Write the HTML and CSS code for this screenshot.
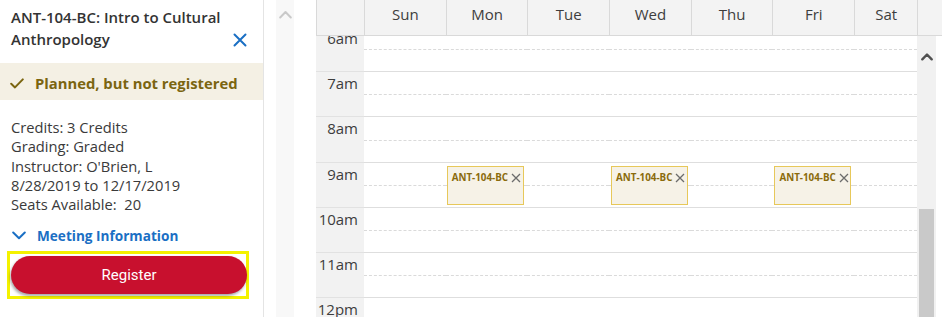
FILE: index.html
```html
<!DOCTYPE html>
<html lang="en">
<head>
<meta charset="utf-8">
<title>Course Schedule</title>
<link rel="stylesheet" href="styles.css">
</head>
<body>
<aside class="sidebar">
  <div class="course-head">
    <h1 class="course-title">ANT-104-BC: Intro to Cultural Anthropology</h1>
    <button class="close-btn" aria-label="Close">
      <svg width="14" height="14" viewBox="0 0 14 14"><path d="M1.5 1.5 L12.5 12.5 M12.5 1.5 L1.5 12.5" stroke="#1a6fc4" stroke-width="2" fill="none" stroke-linecap="round"/></svg>
    </button>
  </div>
  <div class="status">
    <svg width="14" height="11" viewBox="0 0 14 11"><polyline points="1.2,5.8 5,9.4 12.8,1.4" stroke="#7b6510" stroke-width="2" fill="none" stroke-linecap="round" stroke-linejoin="round"/></svg>
    <span>Planned, but not registered</span>
  </div>
  <div class="details">
    <div>Credits: 3 Credits</div>
    <div>Grading: Graded</div>
    <div>Instructor: O'Brien, L</div>
    <div>8/28/2019 to 12/17/2019</div>
    <div>Seats Available:&nbsp; 20</div>
  </div>
  <div class="meeting">
    <svg width="14" height="9" viewBox="0 0 14 9"><polyline points="1.2,1.5 7,7.2 12.8,1.5" stroke="#1a6fc4" stroke-width="2" fill="none" stroke-linecap="round" stroke-linejoin="round"/></svg>
    <span>Meeting Information</span>
  </div>
  <div class="highlight">
    <button class="register-btn">Register</button>
  </div>
</aside>

<div class="gutter">
  <div class="gutter-strip">
    <svg width="13" height="9" viewBox="0 0 13 9"><polyline points="1.2,7.5 6.5,2 11.8,7.5" stroke="#c9c9c9" stroke-width="2" fill="none" stroke-linecap="round" stroke-linejoin="round"/></svg>
  </div>
</div>

<main class="calendar">
  <div class="cal-header">
    <div class="hcell"></div>
    <div class="hcell">Sun</div>
    <div class="hcell">Mon</div>
    <div class="hcell">Tue</div>
    <div class="hcell">Wed</div>
    <div class="hcell">Thu</div>
    <div class="hcell">Fri</div>
    <div class="hcell">Sat</div>
    <div class="hcell hcell-end"></div>
  </div>
  <div class="cal-body">
    <div class="timeline">
      <div class="timeline-inner">
        <div class="time-col">
          <div class="tslot">6am</div>
          <div class="tslot">7am</div>
          <div class="tslot">8am</div>
          <div class="tslot">9am</div>
          <div class="tslot">10am</div>
          <div class="tslot">11am</div>
          <div class="tslot">12pm</div>
        </div>
        <div class="day-col">
          <div class="slot"></div><div class="slot"></div><div class="slot"></div><div class="slot"></div><div class="slot"></div><div class="slot"></div><div class="slot"></div>
        </div>
        <div class="day-col">
          <div class="slot"></div><div class="slot"></div><div class="slot"></div><div class="slot"></div><div class="slot"></div><div class="slot"></div><div class="slot"></div>
          <div class="event ev-9am"><span>ANT-104-BC</span><svg width="10" height="10" viewBox="0 0 10 10"><path d="M1 1 L9 9 M9 1 L1 9" stroke="#6c6c6c" stroke-width="1.3" fill="none"/></svg></div>
        </div>
        <div class="day-col">
          <div class="slot"></div><div class="slot"></div><div class="slot"></div><div class="slot"></div><div class="slot"></div><div class="slot"></div><div class="slot"></div>
        </div>
        <div class="day-col">
          <div class="slot"></div><div class="slot"></div><div class="slot"></div><div class="slot"></div><div class="slot"></div><div class="slot"></div><div class="slot"></div>
          <div class="event ev-9am ev-shift"><span>ANT-104-BC</span><svg width="10" height="10" viewBox="0 0 10 10"><path d="M1 1 L9 9 M9 1 L1 9" stroke="#6c6c6c" stroke-width="1.3" fill="none"/></svg></div>
        </div>
        <div class="day-col">
          <div class="slot"></div><div class="slot"></div><div class="slot"></div><div class="slot"></div><div class="slot"></div><div class="slot"></div><div class="slot"></div>
        </div>
        <div class="day-col">
          <div class="slot"></div><div class="slot"></div><div class="slot"></div><div class="slot"></div><div class="slot"></div><div class="slot"></div><div class="slot"></div>
          <div class="event ev-9am ev-shift"><span>ANT-104-BC</span><svg width="10" height="10" viewBox="0 0 10 10"><path d="M1 1 L9 9 M9 1 L1 9" stroke="#6c6c6c" stroke-width="1.3" fill="none"/></svg></div>
        </div>
        <div class="day-col">
          <div class="slot"></div><div class="slot"></div><div class="slot"></div><div class="slot"></div><div class="slot"></div><div class="slot"></div><div class="slot"></div>
        </div>
      </div>
    </div>
    <div class="scrollbar">
      <svg class="sb-arrow" width="12" height="9" viewBox="0 0 12 9"><polyline points="1.3,7.3 6,2.5 10.7,7.3" stroke="#505050" stroke-width="2.4" fill="none" stroke-linecap="round" stroke-linejoin="round"/></svg>
      <div class="sb-thumb"></div>
    </div>
    <div class="cal-spacer"></div>
  </div>
</main>
</body>
</html>
```

FILE: styles.css
```css
* { box-sizing: border-box; }

html, body {
  margin: 0;
  padding: 0;
  height: 317px;
  overflow: hidden;
  background: #ffffff;
}

body {
  display: flex;
  font-family: "Open Sans", "Noto Sans", sans-serif;
  color: #333333;
}

/* ---------- Sidebar ---------- */
.sidebar {
  flex: none;
  width: 264px;
  border-right: 1px solid #e4e4e4;
  display: flex;
  flex-direction: column;
}

.course-head {
  display: flex;
  justify-content: space-between;
  align-items: flex-start;
  padding: 6px 16px 0 11px;
  height: 63px;
}

.course-title {
  margin: 0;
  font-size: 15px;
  line-height: 22px;
  font-weight: 600;
  color: #333333;
  width: 215px;
}

.close-btn {
  border: 0;
  background: none;
  padding: 0;
  margin-top: 27px;
  width: 14px;
  height: 14px;
  display: flex;
}

.status {
  height: 37px;
  background: #f4f0e4;
  display: flex;
  align-items: center;
  gap: 11px;
  padding: 3px 0 0 10px;
  font-size: 14.8px;
  font-weight: 700;
  color: #7b6510;
}

.details {
  padding: 18px 0 0 11px;
  font-size: 14.7px;
  line-height: 19.3px;
  color: #3a3a3a;
}

.meeting {
  margin-top: 11px;
  padding-left: 12px;
  display: flex;
  align-items: center;
  gap: 11px;
  height: 20px;
  font-size: 13.6px;
  font-weight: 700;
  color: #1a6fc4;
}

.highlight {
  margin: 6px 14px 0 7px;
  border: 3px solid #f4f200;
  padding: 2px 0 0 1px;
  height: 48px;
}

.register-btn {
  display: block;
  width: 236px;
  height: 38px;
  border: 0;
  border-radius: 19px;
  background: #c8102e;
  color: #ffffff;
  font-family: Roboto, "Liberation Sans", sans-serif;
  font-size: 15px;
  font-weight: 400;
  box-shadow: -1px 2px 3px rgba(0, 0, 0, 0.35);
}

/* ---------- Gutter ---------- */
.gutter {
  flex: none;
  width: 52px;
  padding-left: 12px;
}

.gutter-strip {
  width: 18px;
  height: 100%;
  background: #f8f8f8;
  display: flex;
  justify-content: center;
  padding-top: 10px;
}

/* ---------- Calendar ---------- */
.calendar {
  flex: 1;
  display: flex;
  flex-direction: column;
  min-width: 0;
}

.cal-header {
  display: grid;
  grid-template-columns: 48px repeat(6, 81.7px) 63px 1fr;
  height: 36px;
  background: #f3f3f3;
  border-bottom: 1px solid #d9d9d9;
}

.hcell {
  border-left: 1px solid #d9d9d9;
  text-align: center;
  font-size: 15px;
  line-height: 22px;
  padding-top: 3px;
  color: #3d3d3d;
}

.cal-body {
  display: flex;
  height: 281px;
  overflow: hidden;
}

.timeline {
  flex: none;
  width: 601.2px;
  overflow: hidden;
}

.timeline-inner {
  display: grid;
  grid-template-columns: 48px repeat(6, 81.7px) 63px;
  margin-top: -10.3px;
}

.time-col {
  background: #f2f2f2;
}

.tslot {
  height: 45.3px;
  border-top: 1px solid #e2e2e2;
  text-align: right;
  padding: 1px 6px 0 0;
  font-size: 15px;
  line-height: 20px;
  color: #3d3d3d;
}

.day-col {
  position: relative;
}

.slot {
  position: relative;
  height: 45.3px;
  border-top: 1px solid #dedede;
}

.slot::after {
  content: "";
  position: absolute;
  left: 0;
  right: 0;
  top: 22.3px;
  border-top: 1px dashed #dadada;
}

.event {
  position: absolute;
  left: 1px;
  width: 77px;
  height: 39px;
  background: #f6f2e7;
  border: 1px solid #e7c85a;
  display: flex;
  align-items: flex-start;
  gap: 3px;
  padding: 4px 0 0 4px;
  z-index: 1;
}

.ev-9am { top: 140.4px; }
.ev-shift { left: 2px; }

.event span {
  font-size: 9.8px;
  line-height: 13px;
  font-weight: 700;
  color: #8a6b0c;
}

.event svg {
  margin-top: 1.5px;
}

.scrollbar {
  flex: none;
  width: 19px;
  background: #f1f1f1;
  display: flex;
  flex-direction: column;
  align-items: center;
  padding-top: 16px;
}

.sb-arrow {
  flex: none;
}

.sb-thumb {
  flex: none;
  margin-top: 148px;
  width: 15px;
  height: 200px;
  background: #c9c9c9;
}

.cal-spacer {
  flex: 1;
}
```
